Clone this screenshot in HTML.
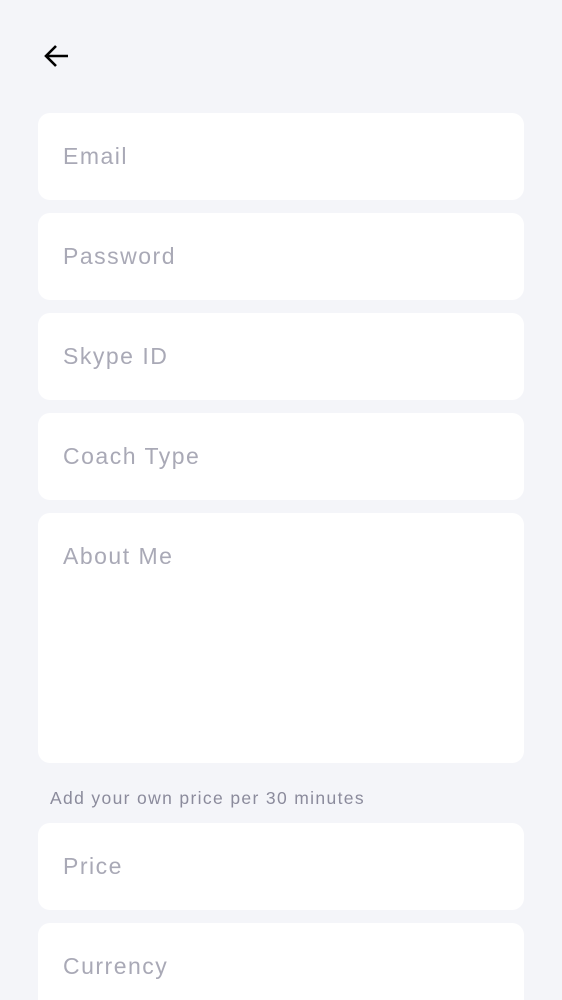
<!DOCTYPE html>
<html style="overflow:hidden;height:1000px"><head><style>
body{margin:0;width:562px;height:1000px;background:#f4f5f9;overflow:hidden;font-family:"Liberation Sans",sans-serif;position:relative}
.f{position:absolute;left:38px;width:486px;height:87px;background:#fff;border-radius:12px}
.f span{position:absolute;left:25px;top:30px;font-size:23px;color:#a9a9b6;line-height:27px;letter-spacing:1.5px}
.l{position:absolute;left:50px;top:788px;font-size:17.5px;color:#8b8b9c;letter-spacing:1.35px}
</style></head><body>
<svg style="position:absolute;left:42px;top:42px" width="28" height="28" viewBox="0 0 28 28"><path d="M26 14H4M14 4L4 14L14 24" fill="none" stroke="#000" stroke-width="2.6"/></svg>
<div class="f" style="top:113px"><span>Email</span></div>
<div class="f" style="top:213px"><span>Password</span></div>
<div class="f" style="top:313px"><span>Skype ID</span></div>
<div class="f" style="top:413px"><span>Coach Type</span></div>
<div class="f" style="top:513px;height:250px"><span>About Me</span></div>
<div class="l">Add your own price per 30 minutes</div>
<div class="f" style="top:823px"><span>Price</span></div>
<div class="f" style="top:923px;height:77px;border-radius:12px 12px 0 0"><span>Currency</span></div>
</body></html>
